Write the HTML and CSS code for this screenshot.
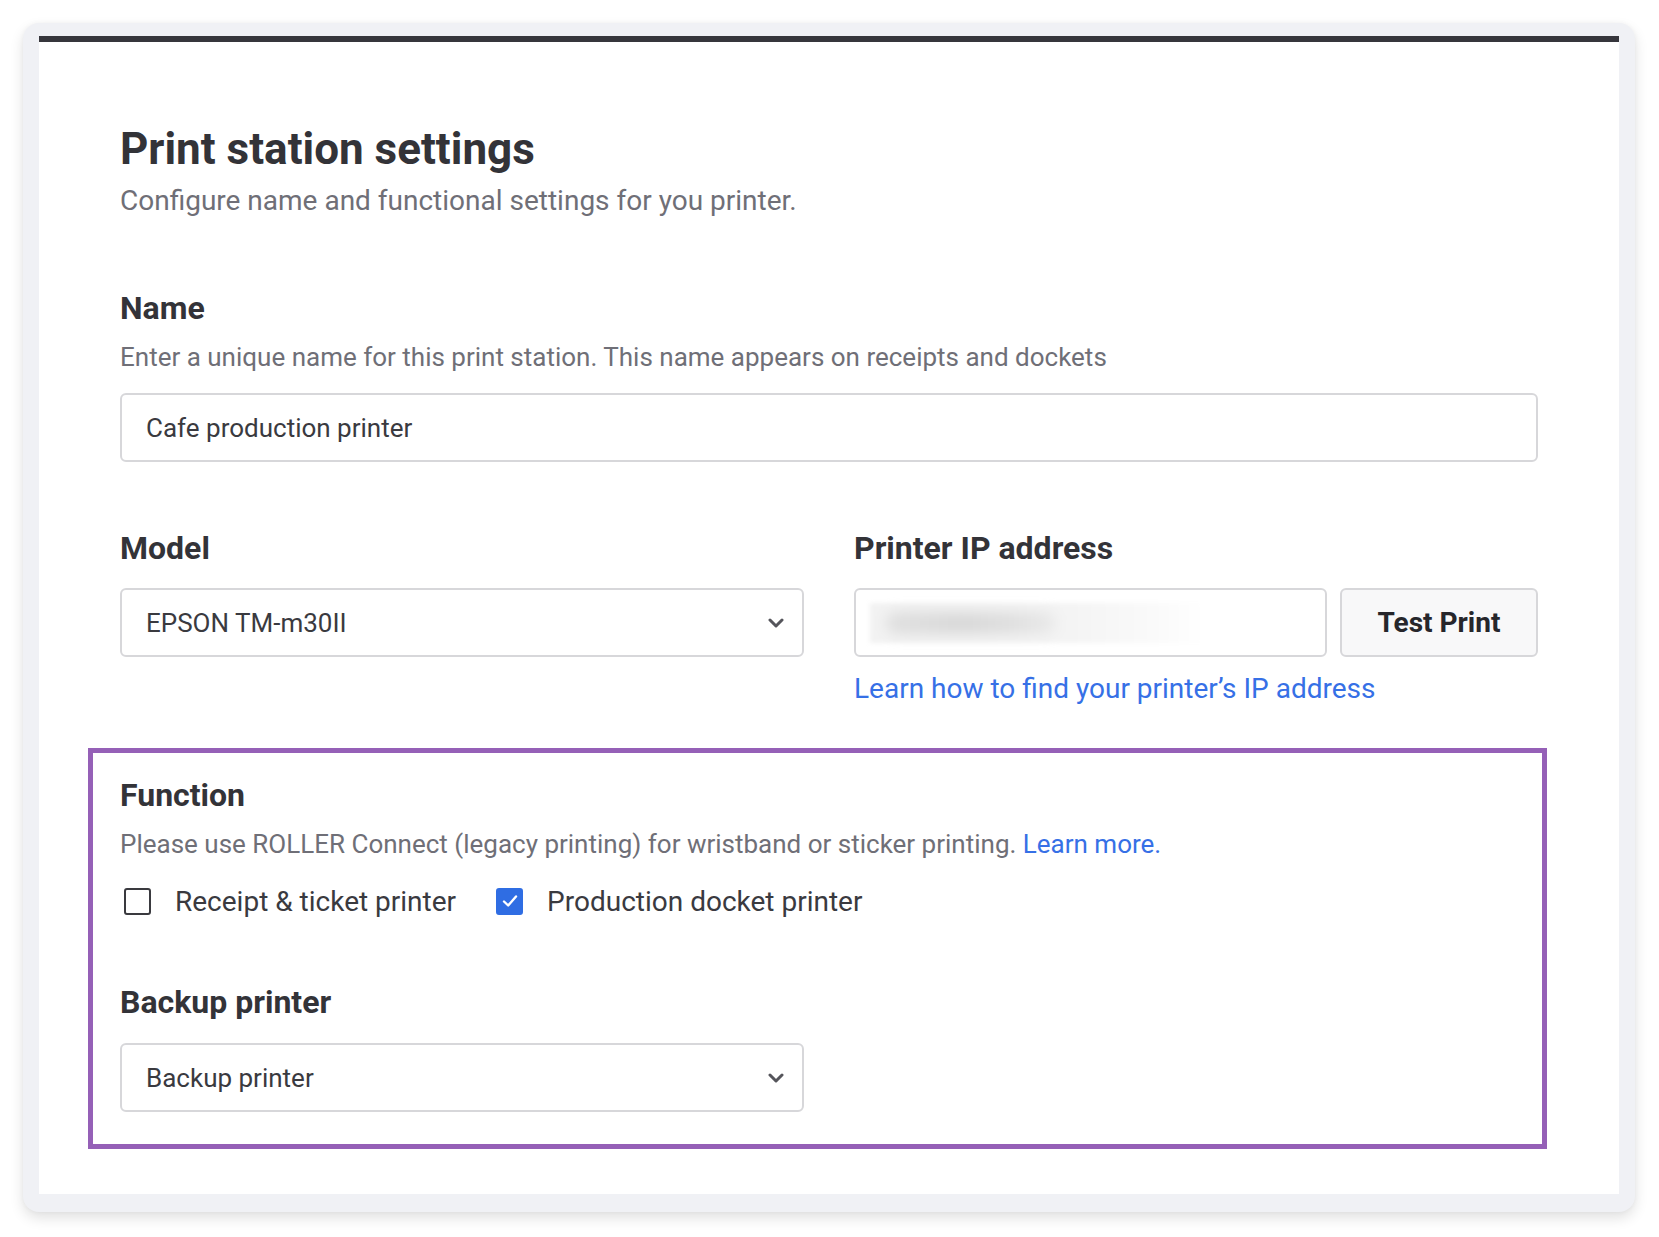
FILE: index.html
```html
<!DOCTYPE html>
<html lang="en">
<head>
    <meta charset="UTF-8">
    <meta name="viewport" content="width=device-width, initial-scale=1.0">
    <title>Print station settings</title>
    <link rel="stylesheet" href="styles.css">
</head>
<body>
    <div class="frame">
        <div class="panel">
            <h1 class="title">Print station settings</h1>
            <p class="subtitle">Configure name and functional settings for you printer.</p>

            <div class="section">
                <label class="label" for="name">Name</label>
                <p class="hint">Enter a unique name for this print station. This name appears on receipts and dockets</p>
                <input class="field" type="text" id="name" value="Cafe production printer">
            </div>

            <div class="section row">
                <div class="col">
                    <label class="label" for="model">Model</label>
                    <div class="select-wrap">
                        <select class="field select" id="model">
                            <option>EPSON TM-m30II</option>
                        </select>
                        <svg class="chevron" viewBox="0 0 16 10" width="16" height="10">
                            <path d="M2 2 L8 8 L14 2" fill="none" stroke="#55555b" stroke-width="3" stroke-linecap="round" stroke-linejoin="round"/>
                        </svg>
                    </div>
                </div>
                <div class="col">
                    <label class="label">Printer IP address</label>
                    <div class="ip-group">
                        <div class="field ip-field"><span class="redacted"></span></div>
                        <button type="button" class="test-btn">Test Print</button>
                    </div>
                    <a href="#" class="link help-link">Learn how to find your printer’s IP address</a>
                </div>
            </div>

            <div class="highlight">
                <div class="label">Function</div>
                <p class="hint">Please use ROLLER Connect (legacy printing) for wristband or sticker printing. <a href="#" class="link">Learn more.</a></p>
                <div class="checks">
                    <label class="check">
                        <span class="box"></span>
                        Receipt &amp; ticket printer
                    </label>
                    <label class="check">
                        <span class="box checked">
                            <svg viewBox="0 0 20 20" width="20" height="20">
                                <path d="M4 10.5 L8.2 14.5 L16 5.5" fill="none" stroke="#fff" stroke-width="2.4" stroke-linecap="round" stroke-linejoin="round"/>
                            </svg>
                        </span>
                        Production docket printer
                    </label>
                </div>

                <div class="section backup">
                    <label class="label" for="backup">Backup printer</label>
                    <div class="select-wrap half">
                        <select class="field select" id="backup">
                            <option>Backup printer</option>
                        </select>
                        <svg class="chevron" viewBox="0 0 16 10" width="16" height="10">
                            <path d="M2 2 L8 8 L14 2" fill="none" stroke="#55555b" stroke-width="3" stroke-linecap="round" stroke-linejoin="round"/>
                        </svg>
                    </div>
                </div>
            </div>
        </div>
    </div>
</body>
</html>
```

FILE: styles.css
```css
* {
    margin: 0;
    padding: 0;
    box-sizing: border-box;
}

body {
    font-family: Roboto, "Liberation Sans", sans-serif;
    background: #fff;
    padding: 23px 24px 25px 23px;
    color: #333338;
}

.frame {
    background: #f0f1f5;
    border-radius: 16px;
    padding: 13px 16px 18px;
    box-shadow: 0 6px 14px rgba(0, 0, 0, 0.12), 0 0 5px rgba(0, 0, 0, 0.04);
}

.panel {
    background: #fff;
    border-top: 6px solid #36363c;
    padding: 81px 81px 45px;
}

.title {
    font-size: 44px;
    line-height: 52px;
    font-weight: 700;
}

.subtitle {
    margin-top: 8px;
    font-size: 28px;
    line-height: 36px;
    color: #6f6f77;
}

.section {
    margin-top: 69px;
}

.label {
    display: block;
    font-size: 32px;
    line-height: 40px;
    font-weight: 700;
}

.hint {
    margin-top: 12px;
    font-size: 26px;
    line-height: 34px;
    color: #6f6f77;
}

.field {
    display: block;
    width: 100%;
    height: 69px;
    margin-top: 19px;
    padding: 0 24px;
    border: 2px solid #d7d7da;
    border-radius: 6px;
    background: #fff;
    font-family: inherit;
    font-size: 26px;
    color: #3a3a3f;
    outline: none;
}

.row {
    display: grid;
    grid-template-columns: 1fr 1fr;
    gap: 50px;
    margin-top: 66px;
}

.select-wrap {
    position: relative;
    margin-top: 20px;
}

.select-wrap .field {
    margin-top: 0;
}

.select {
    appearance: none;
    -webkit-appearance: none;
}

.chevron {
    position: absolute;
    right: 20px;
    top: 30px;
    pointer-events: none;
}

.ip-group {
    display: flex;
    gap: 13px;
    margin-top: 20px;
}

.ip-field {
    flex: 1;
    margin-top: 0;
    padding: 0 14px;
    display: flex;
    align-items: center;
}

.redacted {
    position: relative;
    display: block;
    width: 334px;
    height: 40px;
    background: linear-gradient(to right, #f2f2f2 0%, #f4f4f4 60%, #fafafa 85%, #fff 100%);
    filter: blur(2px);
}

.redacted::before {
    content: "";
    position: absolute;
    left: 16px;
    top: 9px;
    width: 170px;
    height: 22px;
    border-radius: 11px;
    background: linear-gradient(to right, #e0e0e0, #d8d8d8 45%, #dfdfdf 75%, #eaeaea);
    filter: blur(6px);
}

.test-btn {
    width: 198px;
    height: 69px;
    border: 2px solid #d7d7da;
    border-radius: 6px;
    background: #f8f8f9;
    font-family: inherit;
    font-size: 28px;
    font-weight: 700;
    color: #26262b;
    cursor: pointer;
}

.link {
    color: #3670e6;
    text-decoration: none;
}

.help-link {
    display: block;
    margin-top: 15px;
    font-size: 28px;
    line-height: 34px;
}

.highlight {
    margin: 42px -9px 0 -32px;
    padding: 22px 4px 32px 27px;
    border: 5px solid #9560b7;
}

.checks {
    display: flex;
    gap: 36px;
    margin-top: 23px;
}

.check {
    display: flex;
    align-items: center;
    gap: 24px;
    height: 34px;
    font-size: 28px;
    color: #3a3a3f;
}

.box {
    width: 27px;
    height: 27px;
    margin-left: 4px;
    border: 2.5px solid #3a3a3f;
    border-radius: 3px;
    display: flex;
    align-items: center;
    justify-content: center;
}

.box.checked {
    background: #2f6de3;
    border-color: #2f6de3;
}

.backup {
    margin-top: 64px;
}

.half {
    width: calc((100% - 50px) / 2);
    margin-top: 21px;
}
```
